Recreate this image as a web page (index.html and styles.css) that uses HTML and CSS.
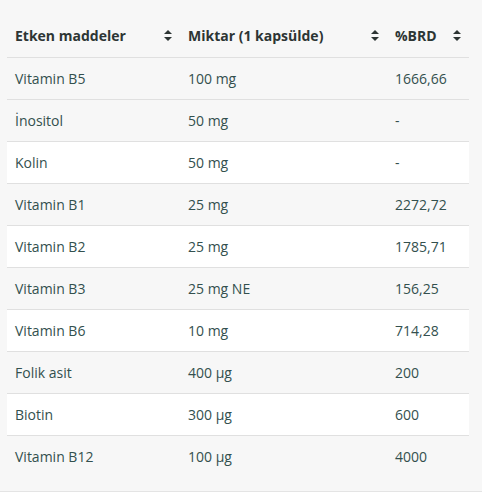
FILE: index.html
```html
<!DOCTYPE html>
<html lang="tr">
<head>
<meta charset="utf-8">
<link rel="stylesheet" href="styles.css">
</head>
<body>
<div class="wrap">
<table class="tbl">
<thead>
<tr>
<th class="c1"><div class="th"><span>Etken maddeler</span><svg class="sort" viewBox="0 0 8 11"><path d="M4 0L8 4H0Z M4 11L0 7H8Z"/></svg></div></th>
<th class="c2"><div class="th"><span>Miktar (1 kapsülde)</span><svg class="sort" viewBox="0 0 8 11"><path d="M4 0L8 4H0Z M4 11L0 7H8Z"/></svg></div></th>
<th class="c3"><div class="th"><span>%BRD</span><svg class="sort" viewBox="0 0 8 11"><path d="M4 0L8 4H0Z M4 11L0 7H8Z"/></svg></div></th>
</tr>
</thead>
<tbody>
<tr class="g"><td>Vitamin B5</td><td>100 mg</td><td>1666,66</td></tr>
<tr class="g"><td>İnositol</td><td>50 mg</td><td>-</td></tr>
<tr><td>Kolin</td><td>50 mg</td><td>-</td></tr>
<tr class="g"><td>Vitamin B1</td><td>25 mg</td><td>2272,72</td></tr>
<tr><td>Vitamin B2</td><td>25 mg</td><td>1785,71</td></tr>
<tr class="g"><td>Vitamin B3</td><td>25 mg NE</td><td>156,25</td></tr>
<tr><td>Vitamin B6</td><td>10 mg</td><td>714,28</td></tr>
<tr class="g"><td>Folik asit</td><td>400 µg</td><td>200</td></tr>
<tr><td>Biotin</td><td>300 µg</td><td>600</td></tr>
<tr class="g"><td>Vitamin B12</td><td>100 µg</td><td>4000</td></tr>
</tbody>
</table>
</div>
</body>
</html>
```
FILE: styles.css
```css
html, body {
  margin: 0;
  padding: 0;
  background: #fff;
}
body {
  font-family: "Open Sans", "Noto Sans", Arial, sans-serif;
  width: 482px;
  height: 493px;
  overflow: hidden;
}
.wrap {
  background: #f7f7f7;
  padding: 15px 13px 14px 7px;
  border-bottom: 1px solid #e4e4e4;
}
.tbl {
  width: 462px;
  border-collapse: collapse;
  table-layout: fixed;
}
.c1 { width: 173px; }
.c2 { width: 207px; }
.c3 { width: 82px; }
.tbl th {
  height: 42px;
  padding: 0 8px;
  text-align: left;
  font-size: 14px;
  font-weight: 700;
  color: #2d3534;
  border-bottom: 1px solid #e0e0e0;
  box-sizing: border-box;
}
.th {
  display: flex;
  align-items: center;
  justify-content: space-between;
}
.sort {
  width: 8px;
  height: 11px;
  fill: #2d3534;
  margin-right: 0;
}
.tbl td {
  height: 42px;
  padding: 0 8px;
  font-size: 14px;
  color: #33504e;
  background: #fff;
  border-bottom: 1px solid #e0e0e0;
  box-sizing: border-box;
}
.tbl tr.g td {
  background: #f7f7f7;
}
.tbl tbody tr:last-child td {
  border-bottom: none;
}
```
